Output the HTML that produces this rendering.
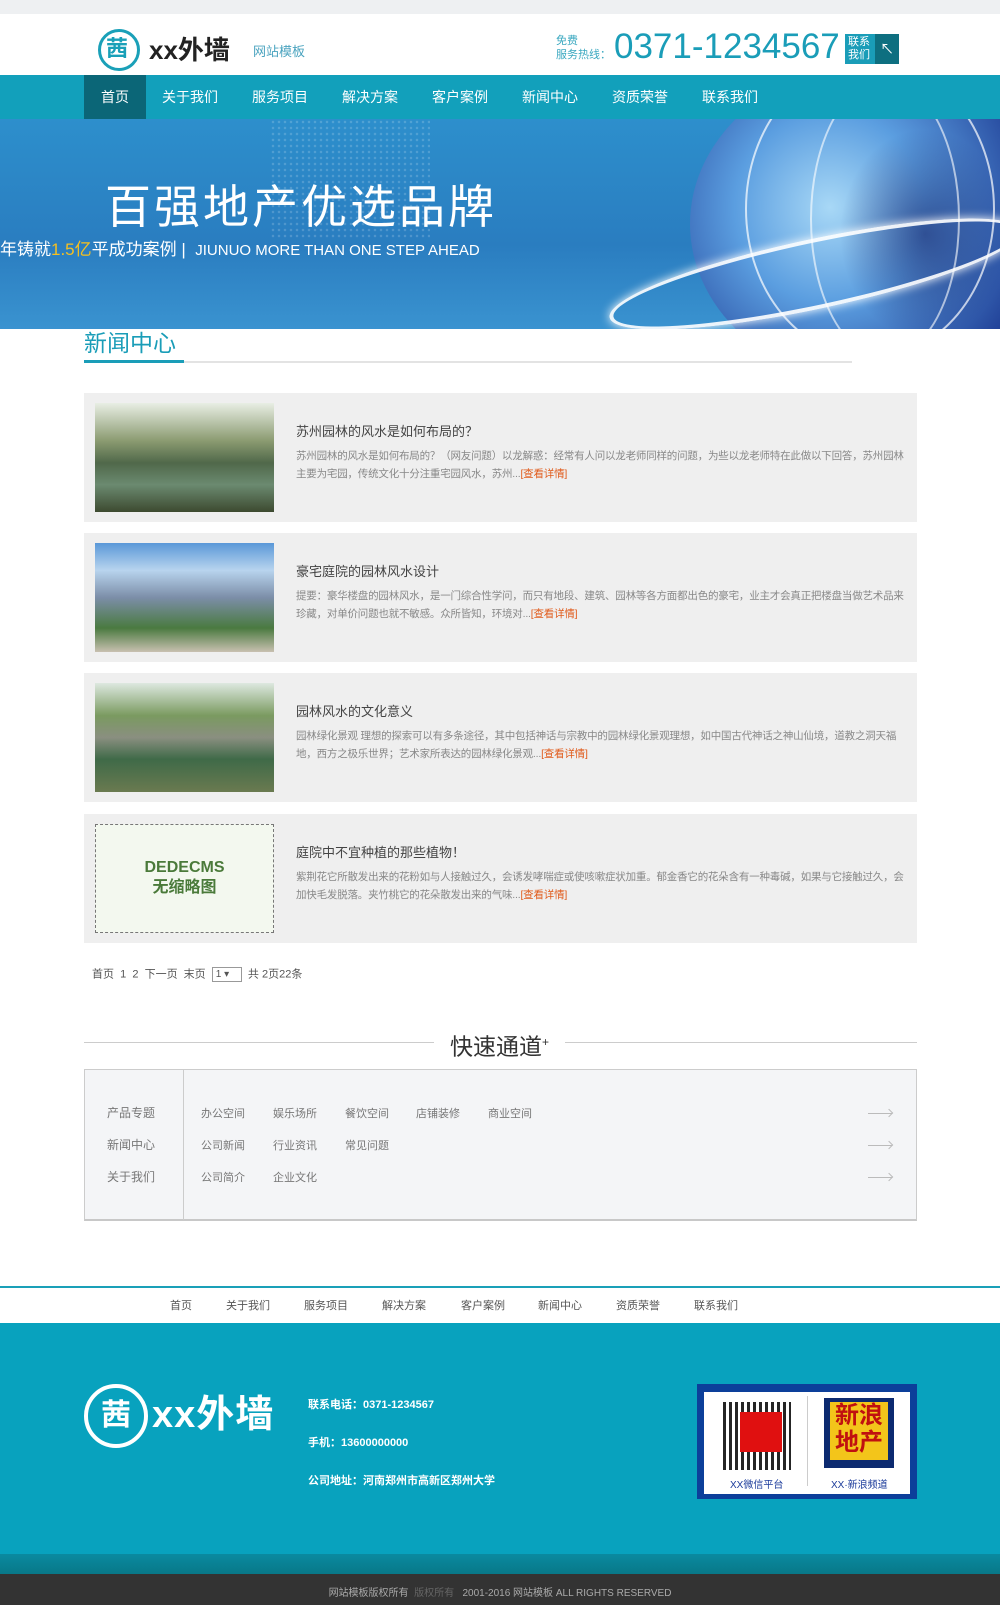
<!DOCTYPE html>
<html><head><meta charset="utf-8"><style>
*{margin:0;padding:0;box-sizing:border-box}
body{width:1000px;height:1605px;position:relative;background:#fff;font-family:"Liberation Sans","Noto Sans CJK SC",sans-serif;overflow:hidden}
.a{position:absolute;white-space:nowrap}
.nav a{position:absolute;top:0;height:44px;line-height:44px;color:#fff;font-size:14px}
.item{position:absolute;left:84px;width:833px;height:129px;background:#efefef}
.item .img{position:absolute;left:11px;top:10px;width:179px;height:109px}
.item .t{position:absolute;left:212px;top:28px;font-size:13px;color:#444}
.item .d{position:absolute;left:212px;top:54px;width:612px;font-size:10.5px;line-height:18px;color:#888;white-space:normal;letter-spacing:-0.2px}
.item .d span{color:#e05a1a}
.q{position:absolute;font-size:11px;color:#777}
.arr{position:absolute;left:868px;width:24px;height:1px;background:#bbb}
.arr:after{content:"";position:absolute;right:0;top:-3px;width:5px;height:5px;border-top:1px solid #bbb;border-right:1px solid #bbb;transform:rotate(45deg)}
.fn{position:absolute;top:1297px;font-size:11px;color:#555}
</style></head><body>
<div class="a" style="left:0;top:0;width:1000px;height:14px;background:#eef0f2"></div>
<div class="a" style="left:98px;top:29px;width:42px;height:42px;border:3px solid #1aa0b8;border-radius:50%"></div>
<div class="a" style="left:106px;top:35px;font-size:22px;color:#1aa0b8;font-weight:bold;line-height:28px">茜</div>
<div class="a" style="left:149px;top:32px;font-size:26px;font-weight:bold;color:#222;line-height:36px">xx外墙</div>
<div class="a" style="left:253px;top:41px;font-size:13px;color:#4aa3bf">网站模板</div>
<div class="a" style="left:556px;top:34px;font-size:11px;color:#3aa8c0;line-height:14px">免费<br>服务热线：</div>
<div class="a" style="left:614px;top:26px;font-size:35px;color:#1a9db8;line-height:42px">0371-1234567</div>
<div class="a" style="left:845px;top:34px;width:30px;height:30px;background:#1a9db8;color:#fff;font-size:11px;line-height:13px;padding:2px 0 0 3px">联系<br>我们</div>
<div class="a" style="left:875px;top:34px;width:24px;height:30px;background:#0e6f80;color:#fff;font-size:14px;text-align:center;line-height:30px">↖</div>
<div class="a nav" style="left:0;top:75px;width:1000px;height:44px;background:#12a0bb">
<a style="left:84px;width:62px;background:#0b6677;text-align:center">首页</a>
<a style="left:162px">关于我们</a><a style="left:252px">服务项目</a><a style="left:342px">解决方案</a><a style="left:432px">客户案例</a><a style="left:522px">新闻中心</a><a style="left:612px">资质荣誉</a><a style="left:702px">联系我们</a>
</div>
<div class="a" style="left:0;top:119px;width:1000px;height:210px;background:linear-gradient(180deg,#2d8fcc 0%,#2a7dc0 60%,#3a93d0 100%);overflow:hidden">
<div class="a" style="left:270px;top:0;width:160px;height:120px;background:radial-gradient(circle,rgba(255,255,255,.25) 1px,transparent 1.5px) 0 0/6px 6px;opacity:.7"></div>
<div class="a" style="left:690px;top:-60px;width:400px;height:330px;border-radius:50%;background:radial-gradient(circle at 35% 45%,#a8d8f6 0%,#5b9ee0 30%,#23449a 65%,#15226a 100%)"></div>
<div class="a" style="left:840px;top:10px;width:170px;height:210px;background:radial-gradient(closest-side,rgba(20,30,100,.6),transparent)"></div>
<div class="a" style="left:605px;top:120px;width:420px;height:70px;border:4px solid rgba(255,255,255,.9);border-radius:50%;transform:rotate(-12deg);box-shadow:0 0 10px #fff"></div>
<div class="a" style="left:745px;top:-60px;width:250px;height:300px;border:2px solid rgba(255,255,255,.7);border-radius:50%"></div>
<div class="a" style="left:810px;top:-40px;width:150px;height:280px;border:2px solid rgba(255,255,255,.6);border-radius:50%"></div>
<div class="a" style="left:105px;top:60px;font-size:46px;color:#fff;letter-spacing:3px;line-height:56px">百强地产优选品牌</div>
<div class="a" style="left:0;top:119px;font-size:17px;color:#fff;line-height:24px">年铸就<span style="color:#f5c020">1.5亿</span>平成功案例 | &nbsp;<span style="font-size:15px">JIUNUO MORE THAN ONE STEP AHEAD</span></div>
</div>
<div class="a" style="left:84px;top:328px;font-size:23px;color:#1a9db8;line-height:30px">新闻中心</div>
<div class="a" style="left:84px;top:361px;width:768px;height:2px;background:#e3e3e3"></div>
<div class="a" style="left:84px;top:360px;width:100px;height:3px;background:#1a9db8"></div>

<div class="item" style="top:393px"><div class="img" style="background:linear-gradient(180deg,#e8eee4 0%,#8a9a70 35%,#50684a 55%,#6b8a70 75%,#3d4a30 100%)"></div><div class="t">苏州园林的风水是如何布局的？</div><div class="d">苏州园林的风水是如何布局的？（网友问题）以龙解惑：经常有人问以龙老师同样的问题，为些以龙老师特在此做以下回答，苏州园林主要为宅园，传统文化十分注重宅园风水，苏州...<span>[查看详情]</span></div></div>
<div class="item" style="top:533px"><div class="img" style="background:linear-gradient(180deg,#5a98d8 0%,#b8d4ee 25%,#7c8ea8 50%,#4a7a40 78%,#c8c0b0 100%)"></div><div class="t">豪宅庭院的园林风水设计</div><div class="d">提要：豪华楼盘的园林风水，是一门综合性学问，而只有地段、建筑、园林等各方面都出色的豪宅，业主才会真正把楼盘当做艺术品来珍藏，对单价问题也就不敏感。众所皆知，环境对...<span>[查看详情]</span></div></div>
<div class="item" style="top:673px"><div class="img" style="background:linear-gradient(180deg,#dde8e0 0%,#7a9a60 30%,#8a8f80 50%,#3f6a48 70%,#6a7a50 100%)"></div><div class="t">园林风水的文化意义</div><div class="d">园林绿化景观 理想的探索可以有多条途径，其中包括神话与宗教中的园林绿化景观理想，如中国古代神话之神山仙境，道教之洞天福地，西方之极乐世界；艺术家所表达的园林绿化景观...<span>[查看详情]</span></div></div>
<div class="item" style="top:814px"><div class="img" style="background:#f3f8ef;border:1px dashed #777;text-align:center;color:#4a7a3a;font-size:16px;line-height:20px;padding-top:33px;font-weight:bold">DEDECMS<br>无缩略图</div><div class="t">庭院中不宜种植的那些植物！</div><div class="d">紫荆花它所散发出来的花粉如与人接触过久，会诱发哮喘症或使咳嗽症状加重。郁金香它的花朵含有一种毒碱，如果与它接触过久，会加快毛发脱落。夹竹桃它的花朵散发出来的气味...<span>[查看详情]</span></div></div>

<div class="a" style="left:92px;top:967px;font-size:11px;color:#555;line-height:14px">首页 &nbsp;1 &nbsp;2 &nbsp;下一页 &nbsp;末页 &nbsp;<span style="display:inline-block;border:1px solid #999;width:30px;height:15px;vertical-align:middle;font-size:10px;padding-left:3px">1 ▾</span> &nbsp;共 2页22条</div>
<div class="a" style="left:84px;top:1042px;width:350px;height:1px;background:#ccc"></div>
<div class="a" style="left:565px;top:1042px;width:352px;height:1px;background:#ccc"></div>
<div class="a" style="left:450px;top:1027px;font-size:23px;color:#333;line-height:30px">快速通道<sup style="font-size:12px">+</sup></div>
<div class="a" style="left:84px;top:1069px;width:833px;height:152px;background:#f4f5f7;border:1px solid #ccc;border-bottom:2px solid #c8c8c8"></div>
<div class="a" style="left:183px;top:1070px;width:1px;height:150px;background:#ccc"></div>
<div class="q" style="left:107px;top:1104px;font-size:12px">产品专题</div>
<div class="q" style="left:107px;top:1136px;font-size:12px">新闻中心</div>
<div class="q" style="left:107px;top:1168px;font-size:12px">关于我们</div>
<div class="q" style="left:201px;top:1105px">办公空间</div><div class="q" style="left:273px;top:1105px">娱乐场所</div><div class="q" style="left:345px;top:1105px">餐饮空间</div><div class="q" style="left:416px;top:1105px">店铺装修</div><div class="q" style="left:488px;top:1105px">商业空间</div>
<div class="q" style="left:201px;top:1137px">公司新闻</div><div class="q" style="left:273px;top:1137px">行业资讯</div><div class="q" style="left:345px;top:1137px">常见问题</div>
<div class="q" style="left:201px;top:1169px">公司简介</div><div class="q" style="left:273px;top:1169px">企业文化</div>
<div class="arr" style="top:1113px"></div><div class="arr" style="top:1145px"></div><div class="arr" style="top:1177px"></div>
<div class="a" style="left:0;top:1286px;width:1000px;height:2px;background:#1aa0b8"></div>
<div class="fn" style="left:170px">首页</div><div class="fn" style="left:226px">关于我们</div><div class="fn" style="left:304px">服务项目</div><div class="fn" style="left:382px">解决方案</div><div class="fn" style="left:461px">客户案例</div><div class="fn" style="left:538px">新闻中心</div><div class="fn" style="left:616px">资质荣誉</div><div class="fn" style="left:694px">联系我们</div>
<div class="a" style="left:0;top:1323px;width:1000px;height:232px;background:#08a2be"></div>
<div class="a" style="left:84px;top:1384px;width:64px;height:64px;border:4px solid #fff;border-radius:50%;color:#fff;font-size:30px;font-weight:bold;text-align:center;line-height:56px">茜</div>
<div class="a" style="left:152px;top:1392px;font-size:38px;font-weight:bold;color:#fff;line-height:46px;letter-spacing:1px">xx外墙</div>
<div class="a" style="left:308px;top:1396px;font-size:11px;color:#fff;font-weight:bold">联系电话：0371-1234567</div>
<div class="a" style="left:308px;top:1434px;font-size:11px;color:#fff;font-weight:bold">手机：13600000000</div>
<div class="a" style="left:308px;top:1472px;font-size:11px;color:#fff;font-weight:bold">公司地址：河南郑州市高新区郑州大学</div>
<div class="a" style="left:697px;top:1384px;width:220px;height:115px;background:#0c3f9a"></div>
<div class="a" style="left:704px;top:1392px;width:206px;height:102px;background:#fff"></div>
<div class="a" style="left:723px;top:1402px;width:68px;height:68px;background:repeating-linear-gradient(90deg,#000 0 3px,#fff 3px 6px),#000;opacity:.85"></div>
<div class="a" style="left:740px;top:1412px;width:42px;height:40px;background:#e01010"></div>
<div class="a" style="left:730px;top:1476px;font-size:10px;color:#1a3a9a">XX微信平台</div>
<div class="a" style="left:807px;top:1396px;width:1px;height:90px;background:#ccc"></div>
<div class="a" style="left:824px;top:1398px;width:70px;height:70px;background:#0c2a70"></div>
<div class="a" style="left:830px;top:1402px;width:58px;height:58px;background:#f3c51a;color:#c01010;font-size:24px;font-weight:bold;line-height:27px;text-align:center">新浪<br>地产</div>
<div class="a" style="left:831px;top:1476px;font-size:10px;color:#1a3a9a">XX·新浪频道</div>
<div class="a" style="left:0;top:1554px;width:1000px;height:20px;background:linear-gradient(#0a8aa0,#087888)"></div>
<div class="a" style="left:0;top:1574px;width:1000px;height:31px;background:#333"></div>
<div class="a" style="left:0;top:1584px;width:1000px;text-align:center;font-size:10px;color:#aaa">网站模板版权所有 &nbsp;<span style="color:#666">版权所有</span> &nbsp; 2001-2016 网站模板 ALL RIGHTS RESERVED</div>
</body></html>
